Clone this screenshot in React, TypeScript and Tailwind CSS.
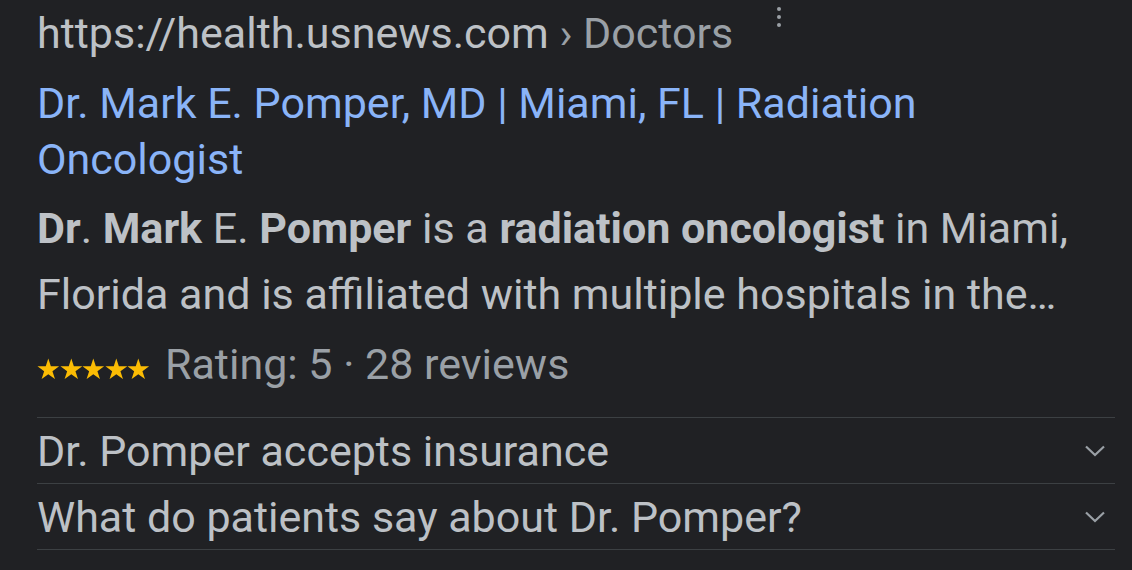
const rows = ["Dr. Pomper accepts insurance", "What do patients say about Dr. Pomper?"];

function Stars() {
  return (
    <span className="mr-[15px] inline-flex items-end pb-[10px]">
      {[0, 1, 2, 3, 4].map((i) => (
        <svg key={i} viewBox="-0.5 -0.5 25 23.8" className="h-[21.5px] w-[22.6px] fill-[#fbbc04]">
          <path d="M12 0l2.83 8.7H24l-7.41 5.38 2.83 8.72L12 17.42 4.58 22.8l2.83-8.72L0 8.7h9.17z" />
        </svg>
      ))}
    </span>
  );
}

function Chevron() {
  return (
    <svg viewBox="0 0 20 12" className="mr-[10px] h-[12px] w-[20px]" fill="none" stroke="#9aa0a6" strokeWidth={2.2}>
      <polyline points="1,1.5 10,10 19,1.5" />
    </svg>
  );
}

export default function App() {
  return (
    <div className="h-[570px] w-[1132px] overflow-hidden bg-[#202124] pl-[37px] pr-[17px] font-['Roboto',sans-serif] text-[43px]">
      <div className="flex items-start">
        <div className="pt-[8px] leading-[50px] text-[#bdc1c6]">
          https://health.usnews.com <span className="text-[#9aa0a6]">› Doctors</span>
        </div>
        <div className="ml-[44px] mt-[7px] flex flex-col gap-[4px]">
          <span className="h-[4px] w-[4px] rounded-full bg-[#9aa0a6]" />
          <span className="h-[4px] w-[4px] rounded-full bg-[#9aa0a6]" />
          <span className="h-[4px] w-[4px] rounded-full bg-[#9aa0a6]" />
        </div>
      </div>
      <h3 className="mt-[17px] leading-[56px] text-[#8ab4f8]">
        Dr. Mark E. Pomper, MD | Miami, FL | Radiation Oncologist
      </h3>
      <p className="mt-[8px] leading-[66px] text-[#bdc1c6]">
        <b className="font-bold">Dr</b>. <b className="font-bold">Mark</b> E. <b className="font-bold">Pomper</b> is a{" "}
        <b className="font-bold">radiation oncologist</b> in Miami, Florida and is affiliated with multiple hospitals in
        the…
      </p>
      <div className="mb-[28px] mt-[12px] flex items-end leading-[50px] text-[#9aa0a6]">
        <Stars />
        <span>Rating: 5 · 28 reviews</span>
      </div>
      <div className="border-t border-[#3c4043]">
        {rows.map((r) => (
          <div key={r} className="flex h-[66px] items-center justify-between border-b border-[#3c4043] text-[#bdc1c6]">
            <span className="leading-[50px]">{r}</span>
            <Chevron />
          </div>
        ))}
      </div>
    </div>
  );
}
